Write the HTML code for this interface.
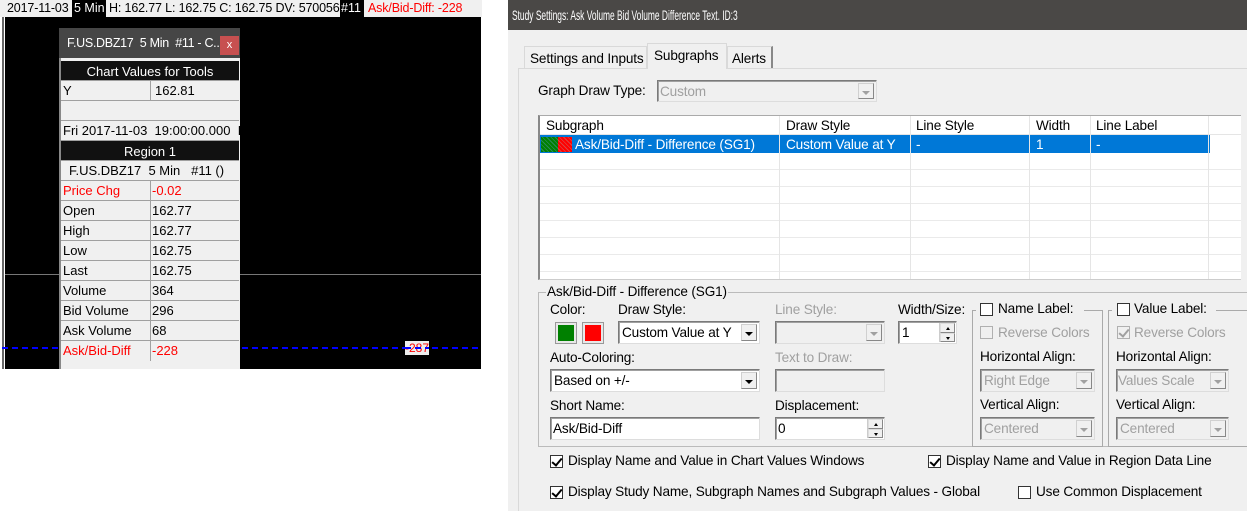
<!DOCTYPE html>
<html><head><meta charset="utf-8"><style>
*{margin:0;padding:0;box-sizing:border-box}
body{width:1247px;height:511px;background:#fff;position:relative;overflow:hidden;font-family:"Liberation Sans",sans-serif;font-size:13px;color:#000}
.a{position:absolute;white-space:nowrap}
.d{font-size:13.6px;letter-spacing:-0.15px}
.g{color:#a0a0a0}
.in{position:absolute;background:#fff;border:1px solid #7a7a7a;border-right-color:#ddd;border-bottom-color:#ddd;box-shadow:inset 1px 1px 0 #a0a0a0}
.dis{background:#f0f0f0}
.dd{position:absolute;top:2px;right:2px;bottom:2px;width:16px;background:#f0f0f0;border:1px solid #d0d0d0;border-right-color:#888;border-bottom-color:#888}
.dd:after{content:"";position:absolute;left:3px;top:7px;border:4px solid transparent;border-top:4px solid #000;border-bottom:0}
.dd.gr:after{border-top-color:#a0a0a0}
.cb{position:absolute;width:13px;height:13px;background:#fff;border:1px solid #333}
.cb.gr{border-color:#b0b0b0;background:#f0f0f0}
.ck:after{content:"";position:absolute;left:3px;top:0px;width:4px;height:8px;border:solid #000;border-width:0 2px 2px 0;transform:rotate(40deg)}
.ck.gr:after{border-color:#a0a0a0}
.row{position:absolute;left:0;width:178px;height:20px;border-bottom:1px solid #a0a0a0}
.c1{position:absolute;left:2px;top:2px}
.c2{position:absolute;left:91px;top:2px}
.vl{position:absolute;left:89px;top:0;width:1px;height:20px;background:#a0a0a0}
.spin{position:absolute;right:1px;top:1px;bottom:1px;width:16px;border-left:1px solid #ccc}
.spin i{display:block;height:50%;background:#f0f0f0;border:1px solid #ddd;border-right-color:#888;border-bottom-color:#888;position:relative}
.spin i:after{content:"";position:absolute;left:5px;top:3px;border:2px solid transparent}
.spin i:first-child:after{border-bottom:3px solid #000;border-top:0}
.spin i:last-child:after{border-top:3px solid #000;border-bottom:0}
</style></head><body>

<!-- LEFT CHART -->
<div class="a" style="left:0;top:0;width:482px;height:17px;background:#f0f0f0"></div>
<div class="a" style="left:7px;top:1px;font-size:12.5px;letter-spacing:-0.15px">2017-11-03</div>
<div class="a" style="left:72px;top:0;width:34px;height:17px;background:#000;color:#fff;padding:1px 2px;font-size:12.5px">5 Min</div>
<div class="a" style="left:109px;top:1px;font-size:12.5px;letter-spacing:-0.15px">H: 162.77 L: 162.75 C: 162.75 DV: 570056</div>
<div class="a" style="left:340px;top:0;width:24px;height:17px;background:#000;color:#fff;padding:1px 1px;font-size:12.5px">#11</div>
<div class="a" style="left:368px;top:1px;color:#f00;font-size:12.5px;letter-spacing:-0.15px">Ask/Bid-Diff: -228</div>
<div class="a" style="left:2px;top:17px;width:2px;height:352px;background:#666"></div>
<div class="a" style="left:5px;top:17px;width:476px;height:352px;background:#000"></div>
<div class="a" style="left:5px;top:274px;width:476px;height:1px;background:#777"></div>
<div class="a" style="left:2px;top:347px;width:479px;height:2px;background:repeating-linear-gradient(90deg,#00f 0 6px,transparent 6px 10px)"></div>
<div class="a" style="left:405px;top:341px;width:24px;height:14px;background:#eee;color:#f00;font-size:12px;text-align:center">-287</div>
<div class="a" style="left:405px;top:347px;width:24px;height:2px;background:repeating-linear-gradient(90deg,#00f 0 6px,transparent 6px 10px)"></div>

<!-- popup -->
<div class="a" style="left:59px;top:28px;width:181px;height:30px;background:#464646"></div>
<div class="a" style="left:67px;top:36px;color:#fff;font-size:12.5px;letter-spacing:-0.3px">F.US.DBZ17&nbsp; 5 Min&nbsp; #11 - C...</div>
<div class="a" style="left:220px;top:36px;width:19px;height:19px;background:#c75050;color:#fff;font-size:11px;text-align:center;line-height:18px">x</div>
<div class="a" style="left:59px;top:58px;width:181px;height:311px;background:#f0f0f0;border-left:2px solid #888"></div>
<div class="a" style="left:61px;top:61px;width:178px;height:308px">
 <div class="row" style="top:0;background:#111;color:#fff;text-align:center;padding-top:3px;border-bottom:1px solid #a0a0a0">Chart Values for Tools</div>
 <div class="row" style="top:20px"><span class="c1">Y</span><div class="vl"></div><span class="c2" style="left:94px">162.81</span></div>
 <div class="row" style="top:40px"></div>
 <div class="row" style="top:60px"><span class="c1">Fri 2017-11-03&nbsp;&nbsp;19:00:00.000&nbsp; I</span></div>
 <div class="row" style="top:80px;background:#111;color:#fff;text-align:center;padding-top:3px">Region 1</div>
 <div class="row" style="top:100px"><span class="c1" style="left:8px">F.US.DBZ17&nbsp; 5 Min&nbsp;&nbsp; #11 ()</span></div>
 <div class="row" style="top:120px;color:#f00"><span class="c1">Price Chg</span><div class="vl"></div><span class="c2">-0.02</span></div>
 <div class="row" style="top:140px"><span class="c1">Open</span><div class="vl"></div><span class="c2">162.77</span></div>
 <div class="row" style="top:160px"><span class="c1">High</span><div class="vl"></div><span class="c2">162.77</span></div>
 <div class="row" style="top:180px"><span class="c1">Low</span><div class="vl"></div><span class="c2">162.75</span></div>
 <div class="row" style="top:200px"><span class="c1">Last</span><div class="vl"></div><span class="c2">162.75</span></div>
 <div class="row" style="top:220px"><span class="c1">Volume</span><div class="vl"></div><span class="c2">364</span></div>
 <div class="row" style="top:240px"><span class="c1">Bid Volume</span><div class="vl"></div><span class="c2">296</span></div>
 <div class="row" style="top:260px"><span class="c1">Ask Volume</span><div class="vl"></div><span class="c2">68</span></div>
 <div class="row" style="top:280px;color:#f00;border-bottom:0"><span class="c1">Ask/Bid-Diff</span><div class="vl"></div><span class="c2">-228</span></div>
</div>

<!-- RIGHT DIALOG -->
<div class="a" style="left:508px;top:0;width:739px;height:511px;background:#f0f0f0"></div>
<div class="a" style="left:508px;top:0;width:739px;height:30px;background:#4a4846"></div>
<div class="a" style="left:512px;top:7px;color:#fff;font-size:14px;transform:scaleX(0.6);transform-origin:0 0">Study Settings: Ask Volume Bid Volume Difference Text. ID:3</div>
<div class="a" style="left:518px;top:68px;width:729px;height:443px;border-left:1px solid #d9d9d9;border-top:1px solid #d9d9d9;background:#f0f0f0"></div>
<div class="a d" style="left:524px;top:46px;width:123px;height:23px;border:1px solid #d9d9d9;border-bottom:0;padding:4px 0 0 5px">Settings and Inputs</div>
<div class="a d" style="left:647px;top:43px;width:80px;height:26px;border:1px solid #d9d9d9;border-bottom:0;background:#f0f0f0;padding:4px 0 0 6px">Subgraphs</div>
<div class="a d" style="left:727px;top:46px;width:46px;height:22px;border:1px solid #d9d9d9;border-right:2px solid #888;border-bottom:0;padding:4px 0 0 4px">Alerts</div>

<div class="a d" style="left:538px;top:83px">Graph Draw Type:</div>
<div class="in dis" style="left:657px;top:80px;width:220px;height:22px"><span class="a d g" style="left:2px;top:3px">Custom</span><div class="dd gr"></div></div>

<div class="a" style="left:538px;top:115px;width:703px;height:165px;background:#fff;border-left:2px solid #888;border-top:1px solid #aaa;border-bottom:1px solid #ccc"></div>
<div class="a" style="left:540px;top:116px;width:701px;height:19px;border-bottom:1px solid #e5e5e5"></div>
<div class="a" style="left:540px;top:135px;width:670px;height:18px;background:#0078d7"></div>
<div class="a" style="left:541px;top:137px;width:17px;height:15px;background:repeating-linear-gradient(45deg,#008000 0 2px,#2a8a5a 2px 3px)"></div>
<div class="a" style="left:558px;top:137px;width:14px;height:15px;background:repeating-linear-gradient(45deg,#f00 0 2px,#d44 2px 3px)"></div>
<div class="a" style="left:540px;top:153px;width:701px;height:126px;background:repeating-linear-gradient(180deg,#fff 0 16px,#eaeaea 16px 17px)"></div>
<div class="a" style="left:779px;top:116px;width:1px;height:163px;background:#e5e5e5"></div>
<div class="a" style="left:910px;top:116px;width:1px;height:163px;background:#e5e5e5"></div>
<div class="a" style="left:1029px;top:116px;width:1px;height:163px;background:#e5e5e5"></div>
<div class="a" style="left:1090px;top:116px;width:1px;height:163px;background:#e5e5e5"></div>
<div class="a" style="left:1208px;top:116px;width:1px;height:163px;background:#e5e5e5"></div>
<div class="a d" style="left:546px;top:118px">Subgraph</div>
<div class="a d" style="left:786px;top:118px">Draw Style</div>
<div class="a d" style="left:916px;top:118px">Line Style</div>
<div class="a d" style="left:1036px;top:118px">Width</div>
<div class="a d" style="left:1096px;top:118px">Line Label</div>
<div class="a d" style="left:575px;top:137px;color:#fff">Ask/Bid-Diff - Difference (SG1)</div>
<div class="a d" style="left:786px;top:137px;color:#fff">Custom Value at Y</div>
<div class="a d" style="left:916px;top:137px;color:#fff">-</div>
<div class="a d" style="left:1036px;top:137px;color:#fff">1</div>
<div class="a d" style="left:1096px;top:137px;color:#fff">-</div>

<!-- group -->
<div class="a" style="left:538px;top:292px;width:709px;height:155px;border:1px solid #bbb;border-right:0"></div>
<div class="a d" style="left:546px;top:284px;background:#f0f0f0;padding:0 1px">Ask/Bid-Diff - Difference (SG1)</div>
<div class="a d" style="left:550px;top:302px">Color:</div>
<div class="a" style="left:555px;top:322px;width:22px;height:22px;background:#e8e8e8;border:1px solid #999;padding:2px"><div style="width:100%;height:100%;background:#008000"></div></div>
<div class="a" style="left:582px;top:322px;width:22px;height:22px;background:#e8e8e8;border:1px solid #999;padding:2px"><div style="width:100%;height:100%;background:#f00"></div></div>
<div class="a d" style="left:618px;top:302px">Draw Style:</div>
<div class="in" style="left:618px;top:321px;width:142px;height:23px"><span class="a d" style="left:3px;top:3px">Custom Value at Y</span><div class="dd"></div></div>
<div class="a d g" style="left:775px;top:302px">Line Style:</div>
<div class="in dis" style="left:775px;top:321px;width:110px;height:23px"><div class="dd gr"></div></div>
<div class="a d" style="left:898px;top:302px">Width/Size:</div>
<div class="in" style="left:898px;top:321px;width:59px;height:23px"><span class="a d" style="left:3px;top:3px">1</span><div class="spin"><i></i><i></i></div></div>
<div class="a d" style="left:550px;top:350px">Auto-Coloring:</div>
<div class="in" style="left:550px;top:369px;width:210px;height:23px"><span class="a d" style="left:3px;top:3px">Based on +/-</span><div class="dd"></div></div>
<div class="a d g" style="left:775px;top:350px">Text to Draw:</div>
<div class="in dis" style="left:775px;top:369px;width:110px;height:23px"></div>
<div class="a d" style="left:550px;top:398px">Short Name:</div>
<div class="in" style="left:550px;top:417px;width:210px;height:23px"><span class="a d" style="left:2px;top:3px">Ask/Bid-Diff</span></div>
<div class="a d" style="left:775px;top:398px">Displacement:</div>
<div class="in" style="left:775px;top:417px;width:110px;height:23px"><span class="a d" style="left:2px;top:3px">0</span><div class="spin"><i></i><i></i></div></div>

<div class="a" style="left:972px;top:310px;width:131px;height:137px;border:1px solid #aaa"></div>
<div class="a" style="left:976px;top:302px;width:108px;height:16px;background:#f0f0f0"></div>
<div class="cb" style="left:980px;top:303px"></div>
<div class="a d" style="left:998px;top:301px">Name Label:</div>
<div class="cb gr" style="left:980px;top:326px"></div>
<div class="a d g" style="left:998px;top:325px">Reverse Colors</div>
<div class="a d" style="left:980px;top:349px">Horizontal Align:</div>
<div class="in dis" style="left:980px;top:369px;width:115px;height:23px"><span class="a d g" style="left:3px;top:3px">Right Edge</span><div class="dd gr"></div></div>
<div class="a d" style="left:980px;top:397px">Vertical Align:</div>
<div class="in dis" style="left:980px;top:417px;width:115px;height:23px"><span class="a d g" style="left:3px;top:3px">Centered</span><div class="dd gr"></div></div>

<div class="a" style="left:1108px;top:310px;width:139px;height:137px;border:1px solid #aaa;border-right:0"></div>
<div class="a" style="left:1112px;top:302px;width:104px;height:16px;background:#f0f0f0"></div>
<div class="cb" style="left:1117px;top:303px"></div>
<div class="a d" style="left:1134px;top:301px">Value Label:</div>
<div class="cb gr ck" style="left:1117px;top:326px"></div>
<div class="a d g" style="left:1134px;top:325px">Reverse Colors</div>
<div class="a d" style="left:1116px;top:349px">Horizontal Align:</div>
<div class="in dis" style="left:1116px;top:369px;width:113px;height:23px"><span class="a d g" style="left:1px;top:3px">Values Scale</span><div class="dd gr"></div></div>
<div class="a d" style="left:1116px;top:397px">Vertical Align:</div>
<div class="in dis" style="left:1116px;top:417px;width:113px;height:23px"><span class="a d g" style="left:3px;top:3px">Centered</span><div class="dd gr"></div></div>

<div class="cb ck" style="left:550px;top:455px"></div>
<div class="a d" style="left:568px;top:453px">Display Name and Value in Chart Values Windows</div>
<div class="cb ck" style="left:928px;top:455px"></div>
<div class="a d" style="left:946px;top:453px">Display Name and Value in Region Data Line</div>
<div class="cb ck" style="left:550px;top:486px"></div>
<div class="a d" style="left:568px;top:484px">Display Study Name, Subgraph Names and Subgraph Values - Global</div>
<div class="cb" style="left:1018px;top:486px"></div>
<div class="a d" style="left:1036px;top:484px">Use Common Displacement</div>
</body></html>
